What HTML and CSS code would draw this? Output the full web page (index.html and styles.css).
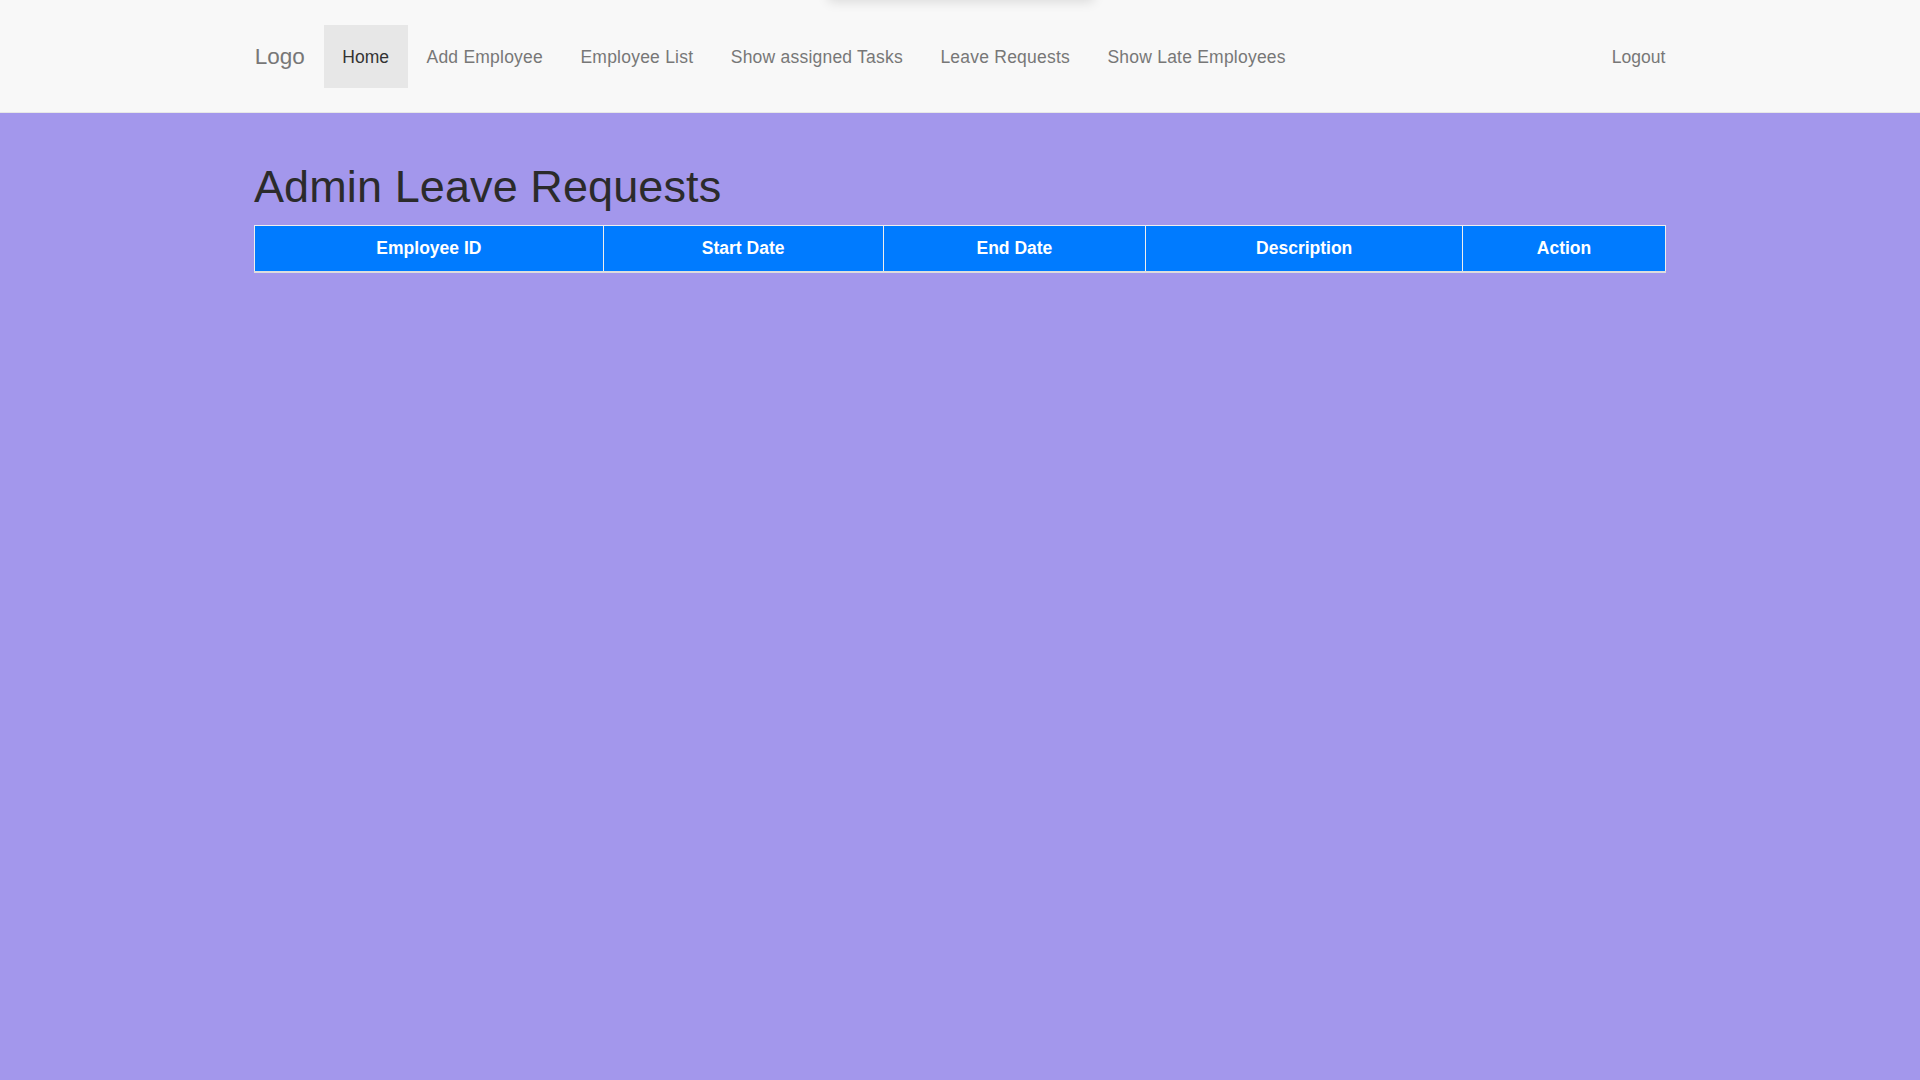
FILE: index.html
```html
<!DOCTYPE html>
<html lang="en">
<head>
<meta charset="utf-8">
<title>Admin Leave Requests</title>
<link rel="stylesheet" href="styles.css">
</head>
<body>
<div class="toast-shadow"></div>
<nav class="navbar">
  <div class="nav-inner">
    <a class="brand" href="#">Logo</a>
    <ul class="nav-links">
      <li><a class="active" href="#">Home</a></li>
      <li><a href="#">Add Employee</a></li>
      <li><a href="#">Employee List</a></li>
      <li><a href="#">Show assigned Tasks</a></li>
      <li><a href="#">Leave Requests</a></li>
      <li><a href="#">Show Late Employees</a></li>
    </ul>
    <ul class="nav-links nav-right">
      <li><a href="#">Logout</a></li>
    </ul>
  </div>
</nav>
<main class="content">
  <h1 class="title">Admin Leave Requests</h1>
  <table class="requests">
    <colgroup>
      <col class="col-id">
      <col class="col-start">
      <col class="col-end">
      <col class="col-desc">
      <col class="col-action">
    </colgroup>
    <thead>
      <tr>
        <th>Employee ID</th>
        <th>Start Date</th>
        <th>End Date</th>
        <th>Description</th>
        <th>Action</th>
      </tr>
    </thead>
    <tbody></tbody>
  </table>
</main>
</body>
</html>
```

FILE: styles.css
```css
html, body {
  margin: 0;
  padding: 0;
}

body {
  background: #a397ec;
  font-family: "Liberation Sans", Arial, sans-serif;
  font-size: 17.5px;
  color: #333;
  min-height: 1080px;
}

.toast-shadow {
  position: fixed;
  top: -40px;
  left: 828px;
  width: 266px;
  height: 40px;
  background: #f8f8f8;
  border-radius: 4px;
  box-shadow: 0 2px 12px rgba(0, 0, 0, 0.12);
  z-index: 10;
}

.navbar {
  background: #f8f8f8;
  border-bottom: 1px solid #e7e7e7;
  padding: 25px 0 24.5px;
}

.nav-inner {
  width: 1448px;
  margin: 0 auto;
  display: flex;
  align-items: center;
  height: 62.5px;
}

.brand {
  display: block;
  padding: 1px 18.75px 0;
  font-size: 22.5px;
  line-height: 61.5px;
  color: #777;
  text-decoration: none;
}

.nav-links {
  list-style: none;
  margin: 0;
  padding: 0;
  display: flex;
}

.nav-links a {
  display: block;
  padding: 2px 18.75px 0;
  line-height: 60.5px;
  font-size: 17.5px;
  letter-spacing: 0.22px;
  color: #777;
  text-decoration: none;
}

.nav-links a.active {
  background: #e7e7e7;
  color: #333;
  letter-spacing: 0;
}

.nav-right a {
  letter-spacing: 0;
}

.nav-right {
  margin-left: auto;
}

.content {
  width: 1412px;
  margin: 0 auto;
  padding-top: 49px;
}

.title {
  margin: 0 0 13.5px;
  font-size: 45px;
  font-weight: 500;
  line-height: 1.1;
  letter-spacing: 0.1px;
  color: #2b2b2b;
}

.requests {
  width: 100%;
  border-collapse: collapse;
  border: 1px solid #eeeeee;
}

.requests th {
  background: #007bff;
  color: #fff;
  font-weight: bold;
  font-size: 17.5px;
  line-height: 24.5px;
  padding: 10px;
  text-align: center;
  border: 1px solid #eeeeee;
  border-bottom: 2px solid #dddddd;
}

.col-id { width: 349px; }
.col-start { width: 280px; }
.col-end { width: 263px; }
.col-desc { width: 317px; }
.col-action { width: 203px; }
```
